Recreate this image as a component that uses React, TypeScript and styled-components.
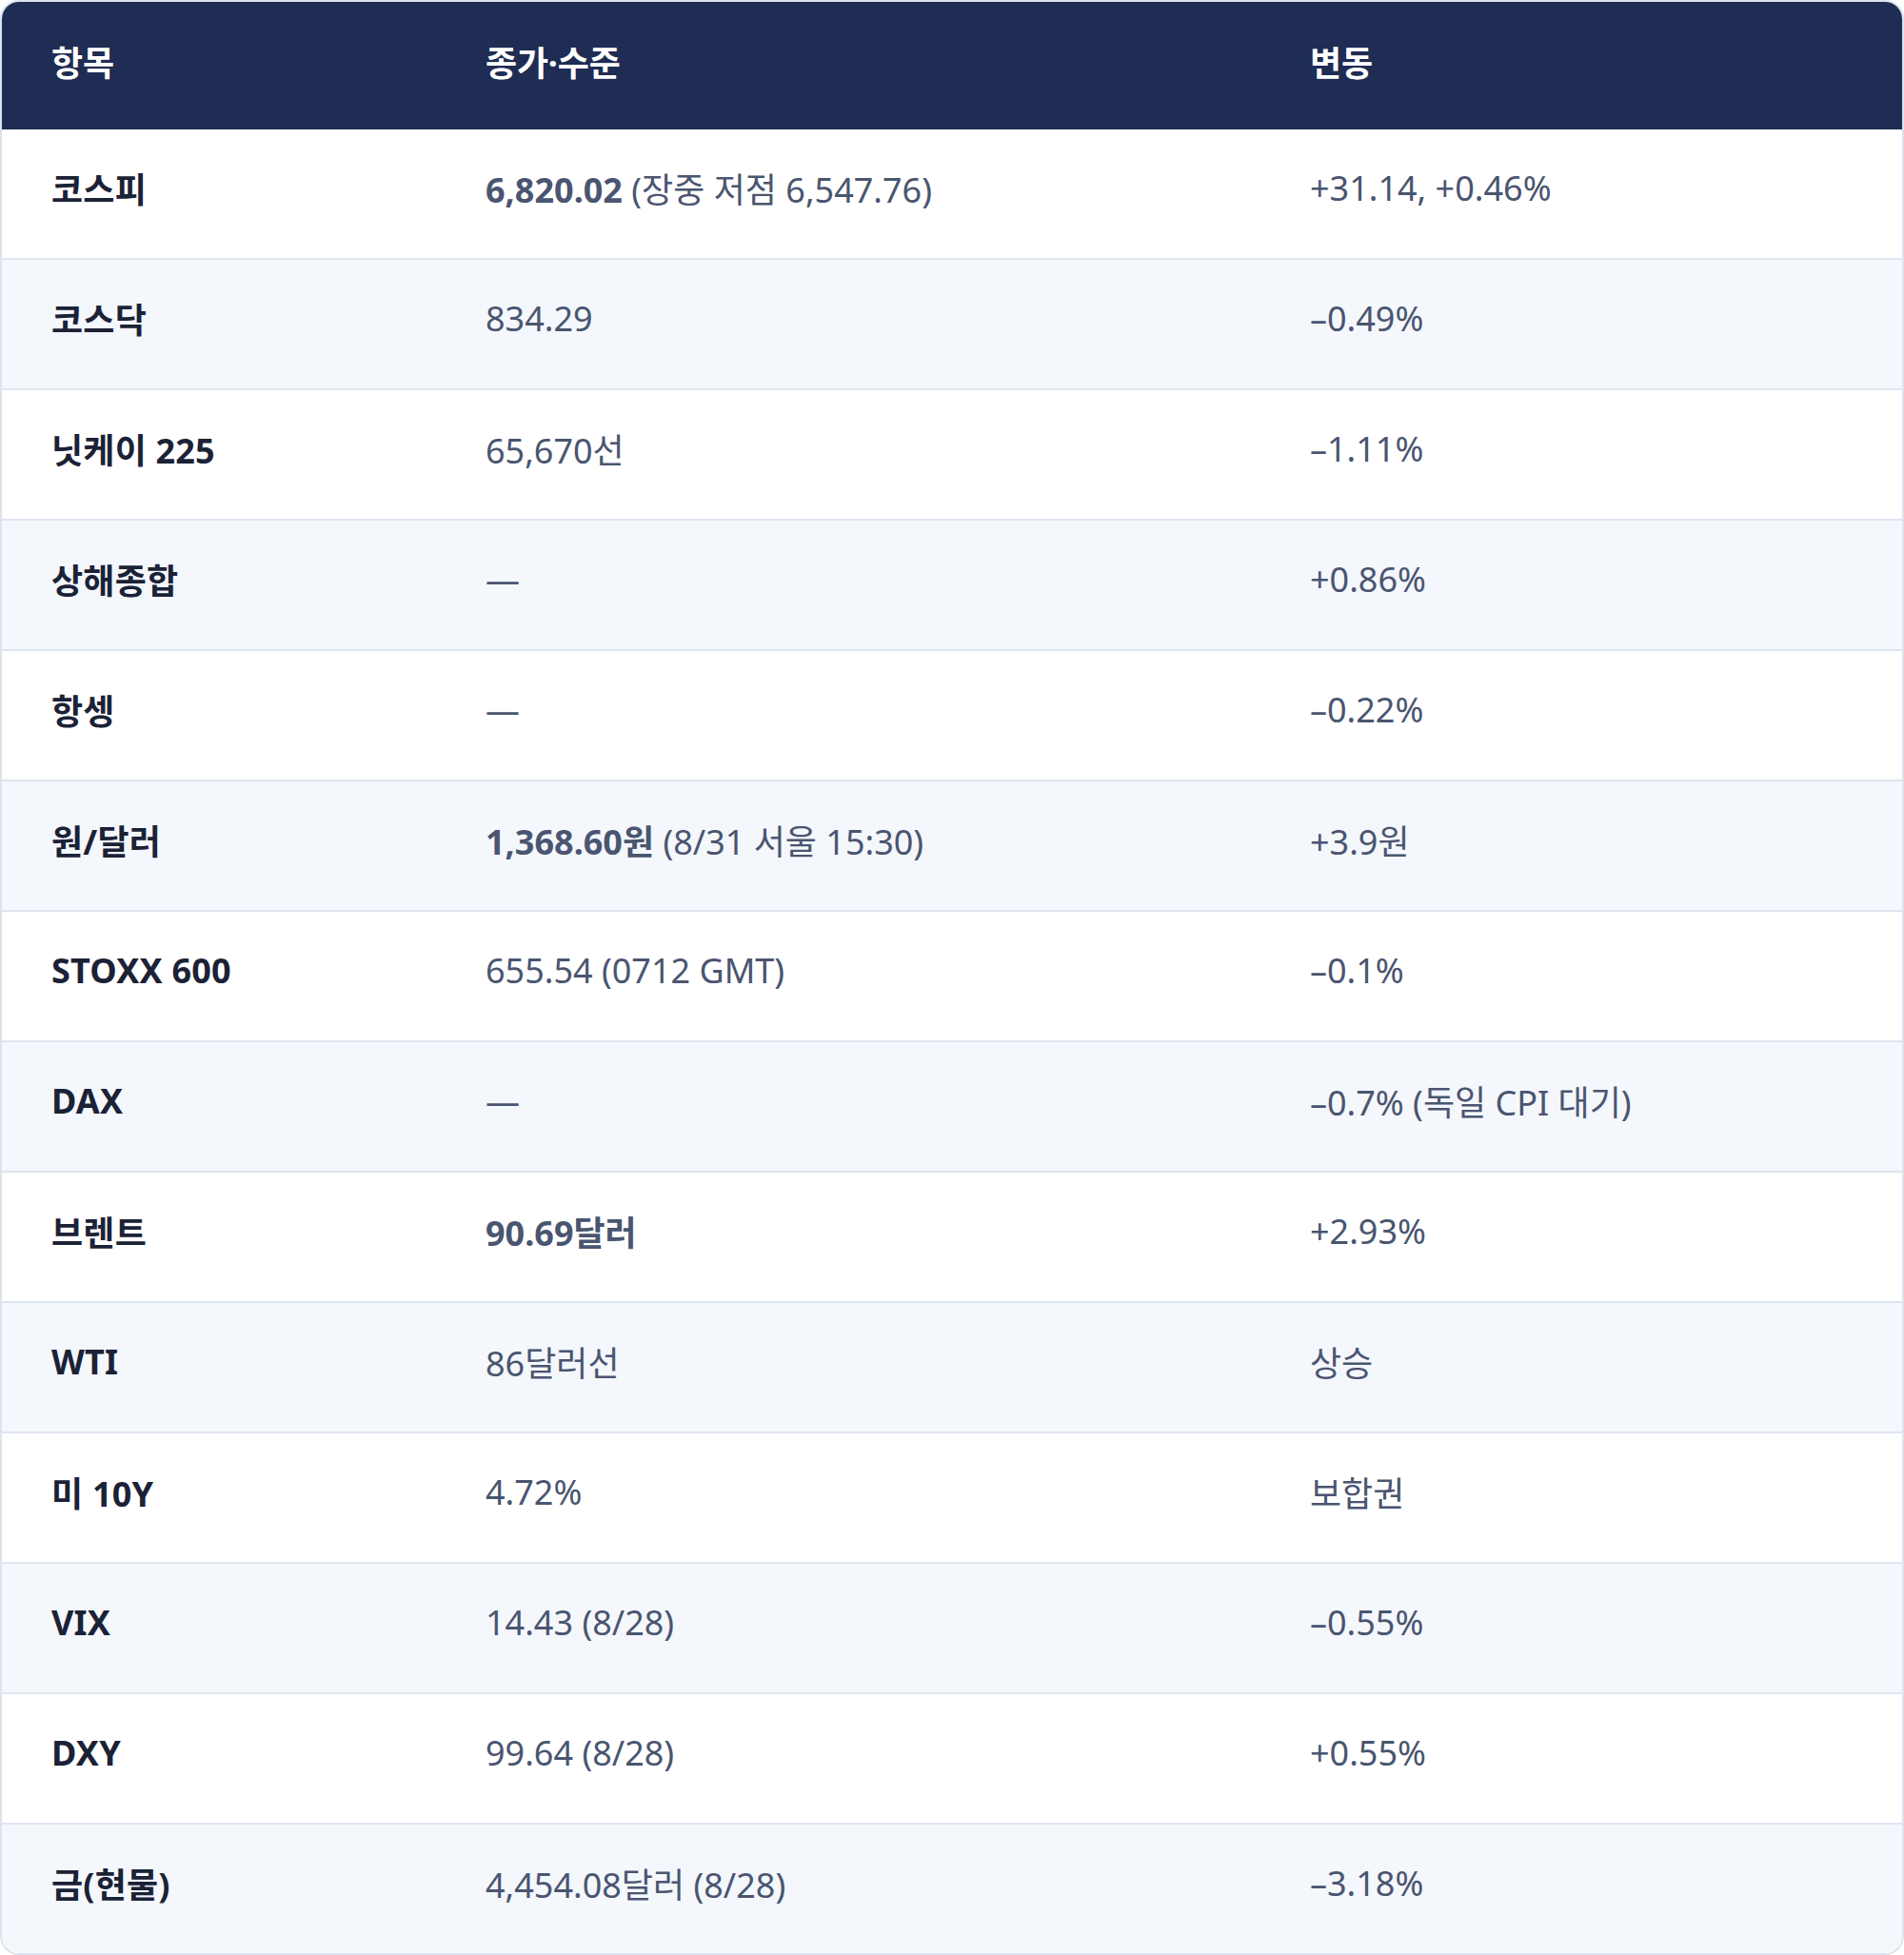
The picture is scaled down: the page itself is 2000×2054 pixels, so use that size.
import React from "react";
import styled, { createGlobalStyle } from "styled-components";

const Global = createGlobalStyle`
  html, body { margin: 0; padding: 0; background: #ffffff; }
  body { font-family: "Noto Sans", "Noto Sans CJK KR", sans-serif; }
  * { box-sizing: border-box; }
`;

const Table = styled.div`
  width: 2000px;
  border: 2px solid #dde3ee;
  border-radius: 20px;
  overflow: hidden;
  background: #ffffff;
`;

const HeaderRow = styled.div`
  display: grid;
  grid-template-columns: 456px 866px 1fr;
  height: 134px;
  padding-bottom: 10px;
  align-items: center;
  background: #1f2c53;
  color: #ffffff;
`;

const HeadCell = styled.div`
  padding-left: 52px;
  font-size: 36px;
  font-weight: 700;
  letter-spacing: -0.2px;
`;

const Row = styled.div<{ $alt: boolean; $last: boolean }>`
  display: grid;
  grid-template-columns: 456px 866px 1fr;
  height: ${(p) => (p.$last ? 135 : 137)}px;
  padding-bottom: 12px;
  align-items: center;
  background: ${(p) => (p.$alt ? "#f4f7fc" : "#ffffff")};
  border-bottom: ${(p) => (p.$last ? "none" : "2px solid #dfe5f0")};
`;

const LabelCell = styled.div`
  padding-left: 52px;
  font-size: 36px;
  font-weight: 700;
  color: #1b2236;
  letter-spacing: 0.2px;
`;

const ValueCell = styled.div`
  padding-left: 52px;
  font-size: 36px;
  font-weight: 400;
  color: #4a5570;
  letter-spacing: 0;
`;

const Strong = styled.strong`
  font-weight: 700;
`;

type Item = { label: string; value: React.ReactNode; change: string };

const items: Item[] = [
  { label: "코스피", value: <><Strong>6,820.02</Strong> (장중 저점 6,547.76)</>, change: "+31.14, +0.46%" },
  { label: "코스닥", value: "834.29", change: "–0.49%" },
  { label: "닛케이 225", value: "65,670선", change: "–1.11%" },
  { label: "상해종합", value: "—", change: "+0.86%" },
  { label: "항셍", value: "—", change: "–0.22%" },
  { label: "원/달러", value: <><Strong>1,368.60원</Strong> (8/31 서울 15:30)</>, change: "+3.9원" },
  { label: "STOXX 600", value: "655.54 (0712 GMT)", change: "–0.1%" },
  { label: "DAX", value: "—", change: "–0.7% (독일 CPI 대기)" },
  { label: "브렌트", value: <Strong>90.69달러</Strong>, change: "+2.93%" },
  { label: "WTI", value: "86달러선", change: "상승" },
  { label: "미 10Y", value: "4.72%", change: "보합권" },
  { label: "VIX", value: "14.43 (8/28)", change: "–0.55%" },
  { label: "DXY", value: "99.64 (8/28)", change: "+0.55%" },
  { label: "금(현물)", value: "4,454.08달러 (8/28)", change: "–3.18%" },
];

export default function App() {
  return (
    <>
      <Global />
      <Table>
        <HeaderRow>
          <HeadCell>항목</HeadCell>
          <HeadCell>종가·수준</HeadCell>
          <HeadCell>변동</HeadCell>
        </HeaderRow>
        {items.map((it, i) => (
          <Row key={it.label} $alt={i % 2 === 1} $last={i === items.length - 1}>
            <LabelCell>{it.label}</LabelCell>
            <ValueCell>{it.value}</ValueCell>
            <ValueCell>{it.change}</ValueCell>
          </Row>
        ))}
      </Table>
    </>
  );
}
